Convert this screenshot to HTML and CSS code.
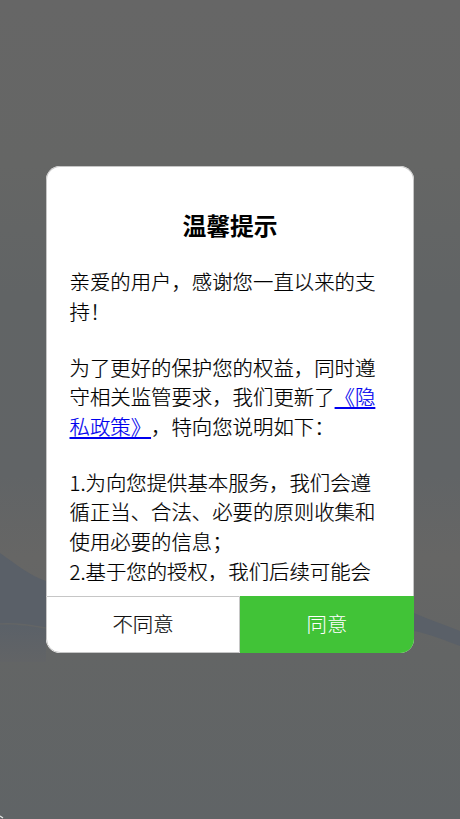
FILE: index.html
```html
<!DOCTYPE html>
<html lang="zh-CN">
<head>
<meta charset="utf-8">
<title>温馨提示</title>
<link rel="stylesheet" href="styles.css">
</head>
<body>
<svg class="backdrop" viewBox="0 0 460 819" preserveAspectRatio="none" aria-hidden="true">
  <defs>
    <linearGradient id="sky" x1="0" y1="0" x2="0" y2="1">
      <stop offset="0" stop-color="#666666"/>
      <stop offset="0.2" stop-color="#656665"/>
      <stop offset="0.36" stop-color="#616465"/>
      <stop offset="0.58" stop-color="#616466"/>
      <stop offset="0.68" stop-color="#666665"/>
      <stop offset="0.8" stop-color="#636565"/>
      <stop offset="1" stop-color="#606466"/>
    </linearGradient>
    <linearGradient id="foot" x1="0" y1="0" x2="0" y2="1">
      <stop offset="0" stop-color="#5b6168"/>
      <stop offset="1" stop-color="#626466"/>
    </linearGradient>
  </defs>
  <rect width="460" height="819" fill="url(#sky)"/>
  <path d="M0 553C16 564 30 576 46 581V628C30 626 14 624 0 625Z" fill="#5a6068"/>
  <path d="M0 625C14 624 30 626 46 628V662H0Z" fill="url(#foot)"/>
  <path d="M0 624C14 623 30 625 46 628" fill="none" stroke="#636566" stroke-width="1.5"/>
  <path d="M414 613C430 620 446 625 460 631V646C446 641 430 634 414 631Z" fill="#5a6068"/>
  <path d="M0 816L3 818" stroke="#e6e6e6" stroke-width="1.4"/>
</svg>
<main class="overlay">
  <section class="dialog">
    <div class="main-panel">
      <h1 class="title">温馨提示</h1>
      <div class="content">
        <p>亲爱的用户，感谢您一直以来的支持！</p>
        <p>为了更好的保护您的权益，同时遵守相关监管要求，我们更新了<a href="#">《隐私政策》</a>，特向您说明如下：</p>
        <p>1.为向您提供基本服务，我们会遵循正当、合法、必要的原则收集和使用必要的信息；<br>2.基于您的授权，我们后续可能会</p>
      </div>
    </div>
    <div class="actions">
      <button class="btn btn-decline" type="button">不同意</button>
      <button class="btn btn-accept" type="button">同意</button>
    </div>
  </section>
</main>
</body>
</html>
```
FILE: styles.css
```css
* { box-sizing: border-box; }
html, body { margin: 0; height: 100%; }
body {
  position: relative;
  overflow: hidden;
  background: #646565;
  font-family: "Noto Sans CJK SC", "Liberation Sans", sans-serif;
  font-weight: 300;
  text-spacing-trim: space-all;
}
.backdrop {
  position: absolute;
  inset: 0;
  width: 100%;
  height: 100%;
  display: block;
}
.overlay {
  position: relative;
  height: 100%;
  display: flex;
  align-items: center;
  justify-content: center;
}
.dialog {
  width: 368px;
  height: 487px;
  border-radius: 14px;
  overflow: hidden;
  display: flex;
  flex-direction: column;
  background: #fff;
}
.main-panel {
  flex: 1;
  min-height: 0;
  display: flex;
  flex-direction: column;
  border: 1px solid #c6c6c6;
  border-bottom: 0;
  border-radius: 14px 14px 0 0;
}
.title {
  margin: 0;
  padding-top: 40px;
  height: 100px;
  flex: none;
  text-align: center;
  font-size: 23.8px;
  line-height: 35px;
  font-weight: 700;
  color: #000;
}
.content {
  margin: 0 0 15px;
  padding: 0 23px 0 22.5px;
  flex: 1;
  min-height: 0;
  overflow: hidden;
  font-size: 20.4px;
  line-height: 29.6px;
  color: #000;
  -webkit-text-stroke: 0.2px #000;
}
.content p { margin: 0 0 26.4px; }
.content a { color: #0000ee; text-decoration: underline; -webkit-text-stroke-color: #0000ee; }
.actions {
  display: flex;
  height: 57px;
  flex: none;
}
.btn {
  margin: 0;
  padding: 0 0 3px;
  border: 0;
  font: inherit;
  font-size: 20.4px;
}
.btn-decline {
  flex: 0 0 194px;
  background: #fff;
  color: #111;
  border: 1px solid #c6c6c6;
  border-radius: 0 0 0 14px;
  -webkit-text-stroke: 0.2px #111;
}
.btn-accept {
  flex: 1;
  background: #41c337;
  color: #fff;
}
```
